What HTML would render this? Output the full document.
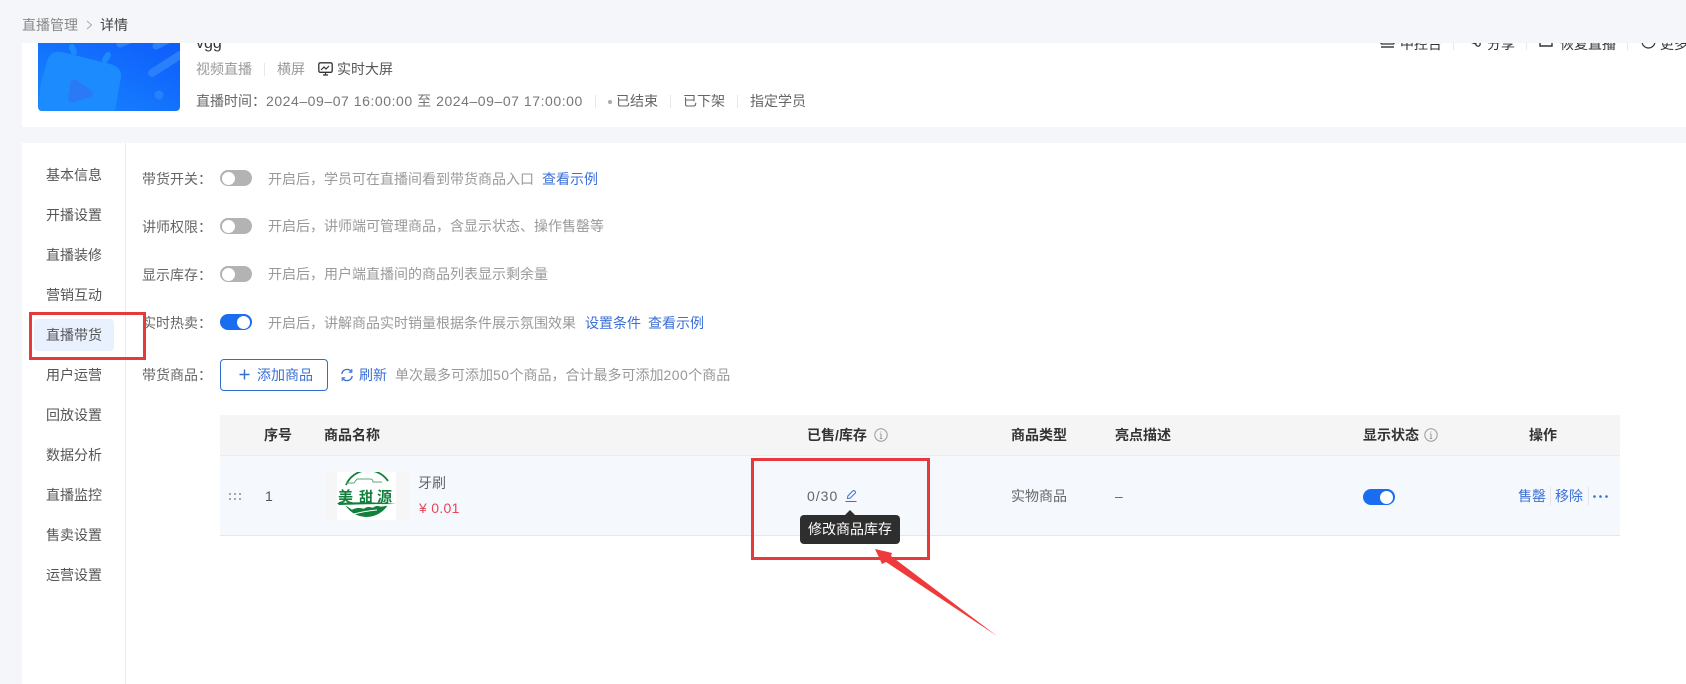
<!DOCTYPE html>
<html lang="zh">
<head>
<meta charset="utf-8">
<style>
html,body{margin:0;padding:0;}
body{width:1686px;height:684px;overflow:hidden;background:#f5f6fa;position:relative;font-family:"Liberation Sans","Noto Sans CJK SC",sans-serif;font-size:14px;color:#555;}
.a{position:absolute;white-space:nowrap;line-height:20px;}
.b{position:absolute;}
.gray{color:#999;}
.lab{color:#666;}
.dark{color:#333;}
.link{color:#3b6fd6;}
.sep{position:absolute;width:1px;height:13px;background:#e8e8e8;}
.sw{position:absolute;width:32px;height:16px;border-radius:8px;background:#b3b3b3;}
.sw i{position:absolute;left:2px;top:1.5px;width:13px;height:13px;border-radius:50%;background:#fff;}
.sw.on{background:#1a6cf0;}
.sw.on i{left:17px;}
.th{font-weight:bold;color:#333;}
.n{letter-spacing:.45px;}
</style>
</head>
<body>
<div class="a" style="left:22px;top:15px;color:#888;">直播管理</div>
<svg class="b" style="left:85px;top:20px;" width="9" height="10" viewBox="0 0 9 10"><path d="M2 1l4.500 4L2 9" fill="none" stroke="#aaa" stroke-width="1"/></svg>
<div class="a" style="left:100px;top:15px;color:#444;">详情</div>

<!-- header panel -->
<div class="b" style="left:22px;top:43px;width:1664px;height:84px;background:#fff;overflow:hidden;">
  <svg class="b" style="left:16px;top:0;" width="142" height="68" viewBox="0 0 142 68">
    <defs>
      <linearGradient id="g" x1="0" y1="1" x2="1" y2="0"><stop offset="0" stop-color="#1688fe"/><stop offset="1" stop-color="#0f5cfc"/></linearGradient>
      <clipPath id="c"><path d="M0 0H142V64a4 4 0 0 1-4 4H4a4 4 0 0 1-4-4Z"/></clipPath>
    </defs>
    <g clip-path="url(#c)">
      <rect width="142" height="68" fill="url(#g)"/>
      <path d="M36 9L34 4M67 17L70 12" stroke="#1c8bfd" stroke-width="6" stroke-linecap="round"/>
      <path d="M24 9L72 21Q84 24 83 34L77 68H1Q0 62 3 40L9 18Q12 7 24 9Z" fill="#1c8bfd"/>
      <path d="M33 38Q36 35 40 38L53 47Q57 51 52 54L36 59Q30 60 30 54Z" fill="#2a7af5"/>
      <path d="M114 30L142 12" stroke="#2a80fb" stroke-width="8" stroke-linecap="round"/>
      <path d="M82 1L94 -4M118 3L134 -5" stroke="#2a80fb" stroke-width="7" stroke-linecap="round"/>
      <circle cx="121" cy="52" r="4.500" fill="#2a80fb"/>
    </g>
  </svg>
  <div class="a" style="left:174px;top:-10px;font-size:16px;line-height:22px;color:#333;">vgg</div>
  <div class="a gray" style="left:174px;top:16px;">视频直播</div>
  <div class="sep" style="left:242px;top:20px;"></div>
  <div class="a gray" style="left:255px;top:16px;">横屏</div>
  <svg class="b" style="left:296px;top:19px;" width="15" height="14" viewBox="0 0 15 14"><rect x=".8" y=".8" width="13.400" height="9.500" rx="1.500" fill="none" stroke="#333" stroke-width="1.300"/><path d="M3 8l3-3 2 2 3-3M5 13h5M7.500 10.500v2" fill="none" stroke="#333" stroke-width="1.200"/></svg>
  <div class="a" style="left:315px;top:16px;color:#555;">实时大屏</div>
  <div class="a lab" style="left:174px;top:48px;">直播时间：</div>
  <div class="a" style="left:244px;top:48px;color:#777;letter-spacing:.55px;">2024–09–07 16:00:00 至 2024–09–07 17:00:00</div>
  <div class="sep" style="left:573px;top:52px;"></div>
  <div class="b" style="left:586px;top:57px;width:4px;height:4px;border-radius:50%;background:#aaa;"></div>
  <div class="a lab" style="left:594px;top:48px;">已结束</div>
  <div class="sep" style="left:648px;top:52px;"></div>
  <div class="a lab" style="left:661px;top:48px;">已下架</div>
  <div class="sep" style="left:715px;top:52px;"></div>
  <div class="a lab" style="left:728px;top:48px;">指定学员</div>

  <svg class="b" style="left:1358px;top:-9px;" width="15" height="15" viewBox="0 0 15 15"><rect x="1" y="1" width="13" height="9" rx="1" fill="none" stroke="#333" stroke-width="1.300"/><path d="M1 13h13" stroke="#333" stroke-width="1.400"/></svg>
  <div class="a dark" style="left:1378px;top:-9px;">中控台</div>
  <div class="sep" style="left:1431px;top:-6px;"></div>
  <svg class="b" style="left:1446px;top:-9px;" width="14" height="15" viewBox="0 0 14 15"><circle cx="10" cy="10" r="2.200" fill="none" stroke="#333" stroke-width="1.300"/><path d="M2 8l6 2" stroke="#333" stroke-width="1.300"/></svg>
  <div class="a dark" style="left:1465px;top:-9px;">分享</div>
  <div class="sep" style="left:1504px;top:-6px;"></div>
  <svg class="b" style="left:1517px;top:-8px;" width="14" height="15" viewBox="0 0 14 15"><path d="M1 1v10h12V7" fill="none" stroke="#333" stroke-width="1.400"/></svg>
  <div class="a dark" style="left:1538px;top:-9px;">恢复直播</div>
  <div class="sep" style="left:1605px;top:-6px;"></div>
  <svg class="b" style="left:1619px;top:-9px;" width="15" height="15" viewBox="0 0 15 15"><circle cx="7.500" cy="7.500" r="6.500" fill="none" stroke="#333" stroke-width="1.200"/></svg>
  <div class="a dark" style="left:1638px;top:-9px;">更多</div>
</div>

<!-- main panel -->
<div class="b" style="left:22px;top:143px;width:1664px;height:541px;background:#fff;"></div>
<div class="b" style="left:125px;top:143px;width:1px;height:541px;background:#ebebeb;"></div>
<div class="b" style="left:34px;top:319px;width:80px;height:32px;border-radius:4px;background:#e8f1fd;"></div>
<div class="a" style="left:46px;top:165px;">基本信息</div>
<div class="a" style="left:46px;top:205px;">开播设置</div>
<div class="a" style="left:46px;top:245px;">直播装修</div>
<div class="a" style="left:46px;top:285px;">营销互动</div>
<div class="a" style="left:46px;top:325px;">直播带货</div>
<div class="a" style="left:46px;top:365px;">用户运营</div>
<div class="a" style="left:46px;top:405px;">回放设置</div>
<div class="a" style="left:46px;top:445px;">数据分析</div>
<div class="a" style="left:46px;top:485px;">直播监控</div>
<div class="a" style="left:46px;top:525px;">售卖设置</div>
<div class="a" style="left:46px;top:565px;">运营设置</div>

<div class="a lab" style="left:142px;top:169px;">带货开关：</div>
<div class="sw" style="left:220px;top:170px;"><i></i></div>
<div class="a gray" style="left:268px;top:169px;">开启后，学员可在直播间看到带货商品入口</div>
<div class="a link" style="left:542px;top:169px;">查看示例</div>

<div class="a lab" style="left:142px;top:217px;">讲师权限：</div>
<div class="sw" style="left:220px;top:218px;"><i></i></div>
<div class="a gray" style="left:268px;top:216px;">开启后，讲师端可管理商品，含显示状态、操作售罄等</div>

<div class="a lab" style="left:142px;top:265px;">显示库存：</div>
<div class="sw" style="left:220px;top:266px;"><i></i></div>
<div class="a gray" style="left:268px;top:264px;">开启后，用户端直播间的商品列表显示剩余量</div>

<div class="a lab" style="left:142px;top:313px;">实时热卖：</div>
<div class="sw on" style="left:220px;top:314px;"><i></i></div>
<div class="a gray" style="left:268px;top:313px;">开启后，讲解商品实时销量根据条件展示氛围效果</div>
<div class="a link" style="left:585px;top:313px;">设置条件</div>
<div class="a link" style="left:648px;top:313px;">查看示例</div>

<div class="a lab" style="left:142px;top:365px;">带货商品：</div>
<div class="b" style="left:220px;top:359px;width:106px;height:30px;border:1px solid #2f6fc9;border-radius:4px;"></div>
<svg class="b" style="left:239px;top:369px;" width="11" height="11" viewBox="0 0 11 11"><path d="M5.500 .5v10M.5 5.500h10" stroke="#2f6fc9" stroke-width="1.400"/></svg>
<div class="a link" style="left:257px;top:365px;">添加商品</div>
<svg class="b" style="left:340px;top:368px;" width="14" height="14" viewBox="0 0 14 14"><path d="M1.800 6A5.300 5.300 0 0 1 11 3.200M12.200 8A5.300 5.300 0 0 1 3 10.800" fill="none" stroke="#3b6fd6" stroke-width="1.300"/><path d="M11.800 1v3.200H8.800M2.200 13V9.800h3" fill="none" stroke="#3b6fd6" stroke-width="1.100"/></svg>
<div class="a link" style="left:359px;top:365px;">刷新</div>
<div class="a gray" style="left:395px;top:365px;">单次最多可添加<span class="n">50</span>个商品，合计最多可添加<span class="n">200</span>个商品</div>

<!-- table -->
<div class="b" style="left:220px;top:415px;width:1400px;height:40px;background:#f5f5f5;border-bottom:1px solid #ebebeb;"></div>
<div class="b" style="left:220px;top:456px;width:1400px;height:79px;background:#f5f8fd;border-bottom:1px solid #e8e8e8;"></div>
<div class="a th" style="left:264px;top:425px;">序号</div>
<div class="a th" style="left:324px;top:425px;">商品名称</div>
<div class="a th" style="left:807px;top:425px;">已售/库存</div>
<svg class="b" style="left:874px;top:428px;" width="14" height="14" viewBox="0 0 14 14"><circle cx="7" cy="7" r="6.200" fill="none" stroke="#999" stroke-width="1"/><path d="M7 6v4.500M5.800 6H7M5.800 10.500h2.400M7 3.500v1" stroke="#999" stroke-width="1" fill="none"/></svg>
<div class="a th" style="left:1011px;top:425px;">商品类型</div>
<div class="a th" style="left:1115px;top:425px;">亮点描述</div>
<div class="a th" style="left:1363px;top:425px;">显示状态</div>
<svg class="b" style="left:1424px;top:428px;" width="14" height="14" viewBox="0 0 14 14"><circle cx="7" cy="7" r="6.200" fill="none" stroke="#999" stroke-width="1"/><path d="M7 6v4.500M5.800 6H7M5.800 10.500h2.400M7 3.500v1" stroke="#999" stroke-width="1" fill="none"/></svg>
<div class="a th" style="left:1529px;top:425px;">操作</div>

<svg class="b" style="left:229px;top:492px;" width="15" height="9" viewBox="0 0 15 9"><g fill="#a8a8a8"><rect x="0" y="1" width="2" height="2"/><rect x="5" y="1" width="2" height="2"/><rect x="10" y="1" width="2" height="2"/><rect x="0" y="6" width="2" height="2"/><rect x="5" y="6" width="2" height="2"/><rect x="10" y="6" width="2" height="2"/></g></svg>
<div class="a" style="left:265px;top:486px;">1</div>

<div class="b" style="left:325px;top:472px;width:84px;height:48px;background:#f6f6f6;"></div>
<svg class="b" style="left:337px;top:472px;" width="59" height="48" viewBox="0 0 59 48">
  <rect width="59" height="48" fill="#fff"/>
  <path d="M9 13A24 24 0 0 1 51 9" fill="none" stroke="#12803c" stroke-width="1.800"/>
  <path d="M9 11h8l3-4h13q3 0 3 3h9" fill="none" stroke="#5aa878" stroke-width="1"/>
  <text x="1" y="30" font-family="'Noto Sans CJK SC',sans-serif" font-size="15" font-weight="bold" fill="#12803c">美</text>
  <text x="22" y="30" font-family="'Noto Sans CJK SC',sans-serif" font-size="14" font-weight="bold" fill="#12803c">甜</text>
  <text x="40" y="30" font-family="'Noto Sans CJK SC',sans-serif" font-size="15" font-weight="bold" fill="#12803c">源</text>
  <path d="M0 31Q30 29 59 32Q30 32 2 33Z" fill="#12803c"/>
  <path d="M9 34A25 25 0 0 0 50 34L44 35Q39 33 36 36Q30 34 27 37Q20 35 15 38Q12 36 9 34Z" fill="#12803c" stroke="#12803c" stroke-width=".5"/>
  <path d="M17 42Q28 39 40 38" fill="none" stroke="#fff" stroke-width="1"/>
</svg>
<div class="a lab" style="left:418px;top:473px;">牙刷</div>
<div class="a" style="left:419px;top:498px;color:#e8455a;letter-spacing:.3px;">¥ 0.01</div>

<div class="a lab" style="left:807px;top:486px;letter-spacing:1px;">0/30</div>
<svg class="b" style="left:844px;top:489px;" width="14" height="14" viewBox="0 0 14 14"><path d="M3.500 9.500L3.800 7 9 1.800q.8-.6 1.500 0l.8.800q.6.700 0 1.500L6 9.300Z" fill="none" stroke="#3b6fd6" stroke-width="1"/><path d="M1.500 12.500h11" stroke="#3b6fd6" stroke-width="1"/></svg>

<div class="a lab" style="left:1011px;top:486px;">实物商品</div>
<div class="a lab" style="left:1115px;top:486px;">–</div>
<div class="sw on" style="left:1363px;top:489px;"><i></i></div>
<div class="a link" style="left:1518px;top:486px;">售罄</div>
<div class="b" style="left:1550px;top:487px;width:1px;height:18px;background:#e4e6ea;"></div>
<div class="a link" style="left:1555px;top:486px;">移除</div>
<div class="b" style="left:1588px;top:487px;width:1px;height:18px;background:#e4e6ea;"></div>
<svg class="b" style="left:1592px;top:494px;" width="17" height="5" viewBox="0 0 17 5"><g fill="#2f6fc9"><circle cx="2.500" cy="2.500" r="1.300"/><circle cx="8.500" cy="2.500" r="1.300"/><circle cx="14.500" cy="2.500" r="1.300"/></g></svg>

<!-- tooltip -->
<div class="b" style="left:800px;top:515px;width:100px;height:29px;background:#2e2e2e;border-radius:4px;"></div>
<div class="b" style="left:845px;top:510px;width:0;height:0;border-left:5px solid transparent;border-right:5px solid transparent;border-bottom:5px solid #2e2e2e;"></div>
<div class="a" style="left:808px;top:519px;color:#fff;">修改商品库存</div>

<!-- annotations -->
<div class="b" style="left:29px;top:312px;width:111px;height:42px;border:3px solid #e5393b;"></div>
<div class="b" style="left:751px;top:458px;width:173px;height:96px;border:3px solid #e5393b;"></div>
<svg class="b" style="left:860px;top:540px;" width="150" height="105" viewBox="0 0 150 105"><path d="M15 9L32 13 31 16 137 96 26 22 22 24Z" fill="#ee3a3a"/></svg>
</body>
</html>
